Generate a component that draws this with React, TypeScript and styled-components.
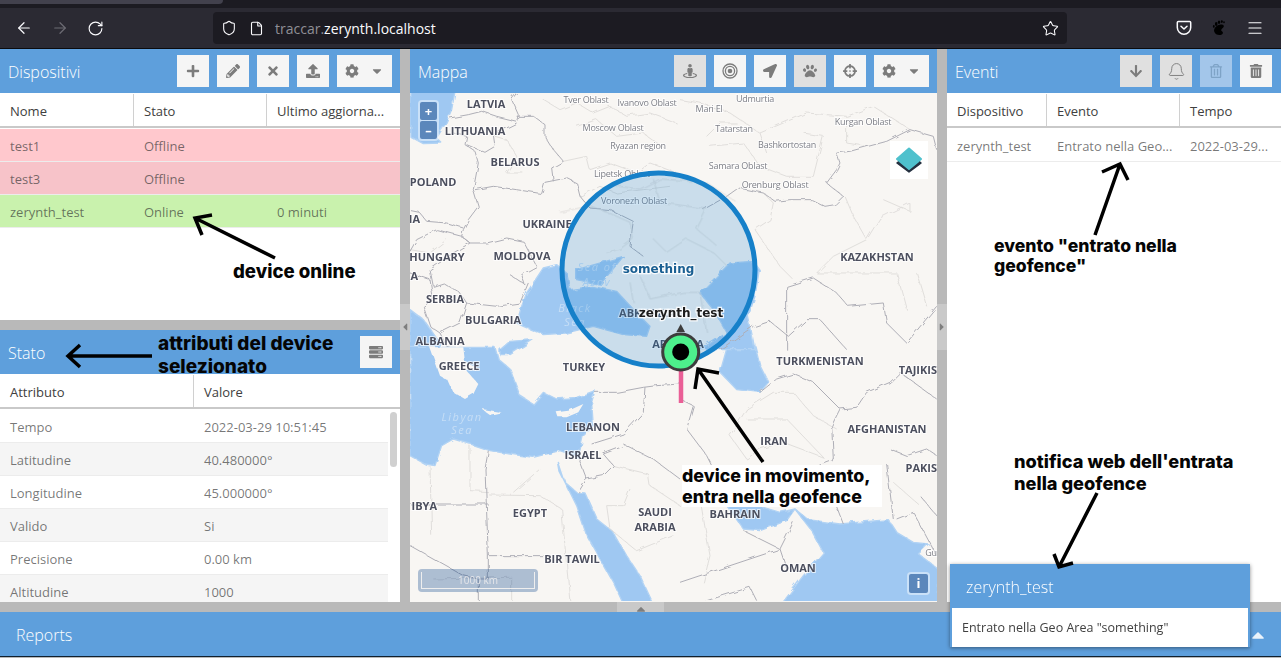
import React from 'react';
import styled, { createGlobalStyle } from 'styled-components';
import { ArrowLeft, ArrowRight, RotateCw, Shield, File, Star, Menu, Bell } from 'lucide-react';
import {
  FaPlus, FaPencilAlt, FaTimes, FaUpload, FaCog, FaCaretDown, FaStreetView,
  FaLocationArrow, FaPaw, FaCrosshairs, FaArrowDown, FaRegTrashAlt, FaTrashAlt, FaServer,
  FaCaretUp, FaCaretLeft, FaCaretRight,
} from 'react-icons/fa';

const Global = createGlobalStyle`
  html, body { margin: 0; padding: 0; background: #000; }
  body { font-family: "Open Sans", "Noto Sans", sans-serif; }
  * { box-sizing: border-box; }
`;

const Screen = styled.div`
  position: relative;
  width: 1281px;
  height: 658px;
  overflow: hidden;
  display: flex;
  flex-direction: column;
  background: #b9b9b9;
`;

/* ---------- browser chrome ---------- */
const TabStrip = styled.div`
  height: 8px;
  background: #1c1b22;
`;
const TabStub = styled.div`
  width: 223px;
  height: 4px;
  background: #42414d;
  border-radius: 0 0 4px 0;
`;
const BrowserBar = styled.div`
  height: 41px;
  background: #2b2a33;
  border-bottom: 1px solid #0b0b0e;
  display: flex;
  align-items: center;
  color: #fbfbfe;
`;
const NavIcons = styled.div`
  width: 213px;
  padding-left: 15px;
  display: flex;
  gap: 18px;
  align-items: center;
`;
const NavSlot = styled.span<{ $dim?: boolean }>`
  display: flex;
  color: ${p => (p.$dim ? '#6d6c74' : '#fbfbfe')};
`;
const UrlBar = styled.div`
  width: 854px;
  height: 32px;
  background: #1c1b22;
  border-radius: 4px;
  display: flex;
  align-items: center;
  padding-left: 8px;
  padding-right: 8px;
`;
const UrlIcons = styled.div`
  display: flex;
  gap: 12px;
  width: 54px;
  align-items: center;
`;
const UrlText = styled.div`
  font-size: 14px;
  color: #fbfbfe;
  flex: 1;
  white-space: nowrap;
`;
const UrlDim = styled.span`
  color: #8f8f96;
`;
const ExtIcons = styled.div`
  flex: 1;
  display: flex;
  align-items: center;
  justify-content: flex-end;
  gap: 19px;
  padding-right: 17px;
`;

/* ---------- workspace ---------- */
const Workspace = styled.div`
  display: flex;
  height: 553px;
`;
const SideColumn = styled.div<{ $w: number }>`
  width: ${p => p.$w}px;
  flex: none;
  display: flex;
  flex-direction: column;
`;
const CenterColumn = styled.div`
  width: 527px;
  flex: none;
  display: flex;
  flex-direction: column;
`;
const VSplit = styled.div`
  position: relative;
  width: 10px;
  flex: none;
  background: #b9b9b9;
`;
const HSplit = styled.div`
  position: relative;
  height: 10px;
  flex: none;
  background: #b9b9b9;
`;
const SplitHandleV = styled.div<{ $top: number }>`
  position: absolute;
  left: 0;
  top: ${p => p.$top}px;
  width: 10px;
  height: 46px;
  background: #c9c9c9;
  color: #7e7e7e;
  display: flex;
  align-items: center;
  justify-content: center;
  font-size: 12px;
`;
const SplitHandleH = styled.div`
  position: absolute;
  left: 617px;
  top: 0;
  width: 47px;
  height: 10px;
  background: #c9c9c9;
  color: #7e7e7e;
  display: flex;
  align-items: flex-start;
  justify-content: center;
  font-size: 14px;
  line-height: 0;
`;
const Panel = styled.section<{ $h?: number }>`
  ${p => (p.$h ? `height: ${p.$h}px;` : 'flex: 1;')}
  min-height: 0;
  background: #fff;
  display: flex;
  flex-direction: column;
  overflow: hidden;
`;
const PanelHeader = styled.header`
  height: 44px;
  flex: none;
  background: #5e9fdc;
  display: flex;
  align-items: center;
  justify-content: space-between;
  padding: 0 8px;
`;
const PanelTitle = styled.h2`
  margin: 2px 0 0;
  font-size: 16px;
  font-weight: 300;
  color: #fff;
`;
const Toolbar = styled.div<{ $pad?: number }>`
  display: flex;
  gap: 8px;
  padding-right: ${p => p.$pad ?? 0}px;
`;
const ToolButton = styled.button<{ $state?: 'on' | 'off'; $wide?: boolean }>`
  width: ${p => (p.$wide ? 55 : 32)}px;
  height: 32px;
  border: 0;
  padding: 0;
  display: flex;
  align-items: center;
  justify-content: center;
  gap: 11px;
  font-size: 14px;
  color: #7c7c7c;
  background: ${p => (p.$state === 'on' ? '#e0e0e0' : '#f5f5f5')};
  ${p => p.$state === 'off' && 'background: #a3c6ea; color: #7ea3c6;'}
`;
const HeadRow = styled.div`
  height: 34px;
  flex: none;
  display: flex;
  margin-top: 1px;
  border-bottom: 2px solid #c9c9c9;
  margin-bottom: 1px;
  background: #fff;
`;
const HeadCell = styled.div<{ $w: number; $last?: boolean }>`
  width: ${p => p.$w}px;
  flex: none;
  padding-left: 10px;
  font-size: 13px;
  line-height: 34px;
  color: #404040;
  white-space: nowrap;
  border-right: ${p => (p.$last ? '0' : '1px solid #d0d0d0')};
`;
const Row = styled.div<{ $bg: string; $w?: number }>`
  height: 33px;
  flex: none;
  width: ${p => (p.$w ? `${p.$w}px` : 'auto')};
  display: flex;
  background: ${p => p.$bg};
  border-bottom: 1px solid #ececec;
`;
const Cell = styled.div<{ $w: number }>`
  width: ${p => p.$w}px;
  flex: none;
  padding: 1px 0 0 10px;
  font-size: 13px;
  line-height: 33px;
  color: rgba(50, 50, 50, 0.66);
  white-space: nowrap;
`;
const ScrollThumb = styled.div`
  position: absolute;
  left: 390px;
  top: 412px;
  width: 7px;
  height: 55px;
  border-radius: 4px;
  background: #d0d0d0;
`;

/* ---------- map ---------- */
const MapPanel = styled.div`
  position: relative;
  flex: 1;
  overflow: hidden;
  background: #f8f6f3;
`;
const MapSvg = styled.svg`
  display: block;
  width: 527px;
  height: 508px;
`;
const Strong = styled.path`
  fill: none;
  stroke: #aeaeb6;
  stroke-width: 3;
  stroke-linejoin: round;
`;
const Faint = styled.path`
  fill: none;
  stroke: #dcdad8;
  stroke-width: 2.6;
  stroke-linejoin: round;
`;
const Water = styled.path`
  fill: #9fc8f2;
  stroke: #b2d3f4;
  stroke-width: 4;
  stroke-linejoin: round;
`;
const Island = styled.path`
  fill: #f8f6f3;
`;
const Country = styled.text<{ $end?: boolean }>`
  font-family: "Open Sans", "Noto Sans", sans-serif;
  font-size: 11px;
  font-weight: 700;
  fill: #4c4f5e;
  stroke: rgba(255, 255, 255, 0.7);
  stroke-width: 2px;
  paint-order: stroke;
  text-anchor: ${p => (p.$end ? 'end' : 'middle')};
  dominant-baseline: central;
`;
const Region = styled.text`
  font-family: "Open Sans", "Noto Sans", sans-serif;
  font-size: 9px;
  letter-spacing: -0.25px;
  fill: #7d7f87;
  stroke: rgba(255, 255, 255, 0.7);
  stroke-width: 2px;
  paint-order: stroke;
  text-anchor: middle;
  dominant-baseline: central;
`;
const Sea = styled.text`
  font-family: "Open Sans", "Noto Sans", sans-serif;
  font-size: 11px;
  font-style: italic;
  letter-spacing: 1.5px;
  fill: #c6def6;
  text-anchor: middle;
  dominant-baseline: central;
`;
const FeatureLabel = styled.text<{ $c: string }>`
  font-family: "DejaVu Sans", sans-serif;
  font-size: 12px;
  font-weight: 700;
  fill: ${p => p.$c};
  stroke: rgba(255, 255, 255, 0.85);
  stroke-width: 2.5px;
  paint-order: stroke;
  text-anchor: middle;
  dominant-baseline: central;
`;
const ZoomBox = styled.div`
  position: absolute;
  left: 8px;
  top: 7px;
  padding: 2px;
  background: rgba(255, 255, 255, 0.45);
  border-radius: 4px;
  display: flex;
  flex-direction: column;
  gap: 1px;
`;
const MapBtn = styled.div<{ $h?: number }>`
  width: 17px;
  height: ${p => p.$h ?? 18}px;
  background: rgba(0, 60, 136, 0.55);
  color: #fff;
  font-size: 13px;
  font-weight: 700;
  line-height: ${p => p.$h ?? 18}px;
  text-align: center;
  border-radius: 2px;
`;
const LayerBox = styled.div`
  position: absolute;
  left: 480px;
  top: 48px;
  width: 38px;
  height: 38px;
  background: #fff;
  display: flex;
  align-items: center;
  justify-content: center;
`;
const InfoBox = styled.div`
  position: absolute;
  left: 497px;
  top: 479px;
  padding: 2px;
  background: rgba(255, 255, 255, 0.45);
  border-radius: 4px;
`;
const InfoBtn = styled(MapBtn)`
  width: 19px;
  height: 19px;
  line-height: 19px;
  font-family: "Open Sans", sans-serif;
`;
const ScaleBox = styled.div`
  position: absolute;
  left: 8px;
  top: 476px;
  width: 120px;
  height: 23px;
  padding: 3px;
  background: rgba(0, 60, 136, 0.3);
  border-radius: 4px;
`;
const ScaleInner = styled.div`
  height: 17px;
  border: 1px solid #eee;
  border-top: 0;
  font-size: 10px;
  color: rgba(238, 238, 238, 0.85);
  text-align: center;
  line-height: 17px;
`;

/* ---------- bottom ---------- */
const ReportsBar = styled.footer`
  height: 45px;
  flex: none;
  background: #5e9fdc;
  border-bottom: 1px solid #10202e;
  padding: 2px 16px 0;
  display: flex;
  align-items: center;
  justify-content: space-between;
  color: #fff;
  font-size: 16px;
  font-weight: 300;
`;
const ReportsCaret = styled.span`
  display: flex;
  margin-right: -3px;
  color: #eaf3fb;
`;
const Toast = styled.aside`
  position: absolute;
  left: 950px;
  top: 564px;
  width: 300px;
  height: 83px;
  background: #5e9fdc;
  box-shadow: 0 1px 4px rgba(0, 0, 0, 0.45);
  display: flex;
  flex-direction: column;
  padding: 0 2px 2px;
`;
const ToastTitle = styled.div`
  height: 44px;
  flex: none;
  padding-left: 14px;
  line-height: 46px;
  font-size: 16px;
  font-weight: 300;
  color: #fff;
`;
const ToastBody = styled.div`
  flex: 1;
  background: #fff;
  padding-left: 10px;
  line-height: 39px;
  font-size: 12.5px;
  color: #404040;
`;

/* ---------- annotations ---------- */
const NoteLayer = styled.svg`
  position: absolute;
  left: 0;
  top: 0;
  width: 1281px;
  height: 658px;
  pointer-events: none;
`;
const Note = styled.div<{ $x: number; $y: number; $size: number; $lh: number; $bg?: boolean }>`
  position: absolute;
  left: ${p => p.$x}px;
  top: ${p => p.$y}px;
  font-family: Inter, "Open Sans", sans-serif;
  font-size: ${p => p.$size}px;
  font-weight: 800;
  line-height: ${p => p.$lh}px;
  color: #050505;
  white-space: pre;
  ${p => p.$bg && 'background: #fff; padding: 0 11px 0 0;'}
`;

const waterA = [
  'M0,-5 L135,-5 L125,50 L105,95 L80,135 L95,150 L40,152 L0,130 Z',
  'M320,690 L335,640 L350,600 L400,525 L440,515 L470,540 L480,590 L545,580 L620,595 L680,660 L720,700 L710,730 L640,725 L550,700 L470,720 L400,725 L340,700 Z',
  'M500,530 L640,490 L620,515 L570,575 L500,560 Z',
  'M0,650 L40,680 L90,750 L75,785 L0,785 Z',
  'M270,770 L300,745 L370,740 L340,760 L300,785 L270,785 Z',
];
const waterB = [
  'M0,-5 L0,320 L45,345 L75,350 L95,290 L130,270 L180,285 L240,305 L300,315 L370,325 L450,305 L505,325 L520,260 L550,230 L545,160 L555,125 L500,145 L440,150 L400,130 L370,165 L330,140 L300,60 L265,30 L255,-5 Z',
  'M445,340 L465,400 L500,430 L525,432 L560,510 L610,550 L650,620 L690,680 L730,765 L640,765 L610,700 L570,630 L530,560 L500,470 L450,370 Z',
];
const waterC = [
  'M60,-10 L225,-10 L240,50 L265,100 L240,130 L170,122 L120,70 L140,0 Z',
  'M140,400 L200,460 L300,490 L345,480 L320,515 L240,545 L190,540 L140,470 Z',
  'M345,480 L385,512 L480,525 L625,512 L650,550 L700,580 L745,585 L715,615 L775,660 L775,765 L305,765 L370,680 L430,610 L395,545 Z',
];
const waterD = [
  'M60,600 L105,555 L150,510 L220,505 L238,530 L225,610 L205,670 L225,770 L60,770 L140,720 L100,650 Z',
];

const strongA = [
  'M120,75 L175,65 L215,55 L260,70 L320,85 L325,65 L305,20 L320,0',
  'M320,70 L370,70 L405,95 L405,130 L430,170 L460,205 L425,225 L430,265',
  'M195,290 L250,280 L320,290 L395,302 L405,268 L470,255 L500,270 L510,310 L540,345 L600,350 L670,385 L665,420 L660,460 L700,490',
  'M165,155 L195,175 L205,210 L190,290 L205,340 L175,380 L160,410 L155,430 L180,450',
  'M165,155 L170,130 L130,120 M170,155 L225,178 L255,160 L250,125 L320,90',
  'M0,350 L25,355 L50,385 L110,390 L160,405',
  'M0,475 L20,440 L80,410 L155,430 L180,450 L230,450 L290,435 L340,445 L380,520 L335,545 L345,575 L300,545',
  'M180,450 L130,480 L60,530 L70,580 L100,570 L150,600 L170,630 L260,640 L330,630 L355,570',
  'M0,540 L60,560 L70,620 L40,640 L60,700 L90,720 L150,690 L170,630',
  'M90,720 L110,760 L170,780',
];
const faintA = [
  'M255,130 L290,140 L320,190 L290,240 L340,240',
  'M400,20 L450,50 L500,30 L550,60 L600,40 L650,70 L720,60 L800,90',
  'M500,100 L560,80 L620,130 L700,120 L770,170',
  'M540,230 L600,210 L680,240 L720,210 L800,240',
  'M460,205 L530,190 L540,230',
  'M510,310 L570,280 L620,300 L700,290 L780,280',
  'M0,470 L60,480 L110,440',
];
const strongB = [
  'M555,130 L620,130 L700,115 L740,110 L810,105',
  'M705,115 L700,190 L640,255 L545,285',
  'M640,285 L730,330 L810,390',
  'M580,315 L640,292',
  'M505,325 L530,390 L505,430',
  'M530,390 L580,380 L610,350 L580,315',
  'M235,305 L225,360 L235,620 L235,690 L205,690 L205,760',
  'M235,620 L400,620',
  'M0,590 L160,680 L205,690',
  'M0,465 L235,465',
];
const faintB = [
  'M60,350 L65,560 M180,290 L180,425 L235,428',
  'M235,438 L390,440 L455,480 L480,760',
  'M390,360 L310,430 M610,350 L715,375 L720,410 L810,470',
  'M660,420 L640,470 L590,470 L600,540 L680,605 L790,560',
  'M70,690 L305,685 L305,760',
];
const strongC = [
  'M0,150 L40,170 L20,240 L80,320 L130,420',
  'M240,130 L290,90 L340,75 L400,100 L480,180 L530,175 L560,130 L630,100 L660,70 L770,150',
  'M480,180 L455,230 L460,330 L420,345 L490,525',
  'M630,300 L680,320 L740,300 L770,320',
  'M620,345 L640,510 M720,440 L770,500',
  'M650,510 L700,490 L770,620',
  'M0,700 L300,600 L340,520 M300,600 L320,660',
  'M80,755 L210,715 L230,755',
  'M190,545 L300,600',
];
const faintC = [
  'M200,180 L280,130 L340,130 L400,200 L470,240',
  'M200,210 L320,210 L430,325 L310,280 L240,300 L200,330 L150,260 L200,180',
  'M430,430 L500,400 L570,380 M640,400 L720,470',
  'M60,450 L90,620 L70,700',
];
const strongD = [
  'M440,270 L490,310 L465,335 L435,340 L395,320 L330,320 L285,325 L250,300 L175,285 L140,310 L70,350',
  'M440,270 L470,230 L480,210 L470,180 L510,175 L620,145 L690,110 L760,130 L770,170',
  'M320,770 L320,580 L400,555 L470,600 L505,640 L610,630 L620,690 L680,750 L770,640',
  'M225,700 L270,685 L325,730 L380,680 L420,680 L500,770',
  'M120,770 L220,700',
];
const faintD = [
  'M0,20 L60,30 L150,60 L240,120 L380,60 L500,70 L580,40 L690,110',
  'M90,160 L190,150 L240,220 L320,250 L400,250 L430,130 L370,120',
  'M80,130 L120,90 L170,90 M240,120 L260,180',
  'M500,100 L500,150 L560,160 M250,300 L280,330 L270,380 L225,410 L300,520 L340,560',
  'M410,540 L460,490 L560,440 L520,370 L495,310 M560,440 L600,375 L690,330 L690,355 L610,320',
  'M410,540 L650,540 L680,650 M710,540 L740,640',
];
const faintE = [
  'M180,150 L270,190 L280,240 L240,270 L200,280 M340,240 L380,280 L440,240 L520,280 L560,320',
  'M340,60 L360,130 L500,150 L470,210 L530,260',
  'M300,350 L330,420 L430,400 L480,400 L500,520',
  'M270,370 L280,430 M60,160 L150,140 L200,160',
  'M220,80 L300,90 L360,60 L500,70 L590,130',
];

const countries: [string, number, number][] = [
  ['LATVIA', 486, 104], ['LITHUANIA', 475, 131], ['BELARUS', 515, 162], ['POLAND', 433, 182],
  ['UKRAINE', 547, 224], ['HUNGARY', 437, 257], ['MOLDOVA', 522, 256], ['SERBIA', 445, 299],
  ['BULGARIA', 493, 320], ['ALBANIA', 440, 341], ['GREECE', 459, 366], ['TURKEY', 584, 367],
  ['ABKHAZIA', 647, 313], ['ARMENIA', 678, 344], ['TURKMENISTAN', 820, 361],
  ['KAZAKHSTAN', 877, 257], ['AFGHANISTAN', 887, 429], ['IRAN', 774, 441],
  ['LEBANON', 593, 427], ['ISRAEL', 583, 455], ['EGYPT', 530, 513], ['SAUDI', 655, 512],
  ['ARABIA', 655, 527], ['BIR TAWIL', 572, 559], ['BAHRAIN', 735, 514], ['OMAN', 798, 568],
];
const clipped: [string, number, number][] = [
  ['TAJIKIS', 937, 370], ['PAKIS', 937, 468], ['IBYA', 437, 506], ['IA', 420, 219], ['A', 418, 276],
];
const regions: [string, number, number][] = [
  ['Tver Oblast', 586, 100], ['Ivanovo Oblast', 647, 103], ['Udmurtia', 755, 99], ['Mari El', 709, 109],
  ['Moscow Oblast', 613, 128], ['Tatarstan', 734, 129], ['Kurgan Oblast', 863, 122], ['Ryazan region', 638, 146],
  ['Bashkortostan', 787, 145], ['Samara Oblast', 738, 166], ['Lipetsk Oblast', 622, 174], ['Orenburg Oblast', 775, 185],
  ['Voronezh Oblast', 634, 201], ['Gu', 931, 553],
];
const seas: [string, number, number][] = [
  ['Sea of', 597, 267], ['Azov', 597, 282], ['Black', 575, 308], ['Sea', 575, 322], ['Libyan', 462, 417], ['Sea', 462, 430],
];

const Draw = ({ ox, oy, water = [], strong = [], faint = [] }: { ox: number; oy: number; water?: string[]; strong?: string[]; faint?: string[] }) => (
  <g transform={`translate(${ox} ${oy}) scale(0.3333)`}>
    {water.map((d, i) => <Water key={i} d={d} />)}
    {faint.map((d, i) => <Faint key={i} d={d} />)}
    {strong.map((d, i) => <Strong key={i} d={d} />)}
  </g>
);

const MapDrawing = () => (
  <MapSvg viewBox="410 94 527 508">
    <defs>
      <filter id="coast" filterUnits="userSpaceOnUse" x="400" y="84" width="547" height="528">
        <feTurbulence type="fractalNoise" baseFrequency="0.11" numOctaves="2" seed="4" />
        <feDisplacementMap in="SourceGraphic" scale="5" />
      </filter>
    </defs>
    <g filter="url(#coast)">
      <Draw ox={410} oy={94} water={waterA} strong={strongA} faint={faintA} />
      <Draw ox={410} oy={350} water={waterB} strong={strongB} faint={faintB} />
      <Draw ox={680} oy={350} water={waterC} strong={strongC} faint={faintC} />
      <Draw ox={680} oy={94} water={waterD} strong={strongD} faint={faintD} />
      <Draw ox={540} oy={160} faint={faintE} />
      <g transform="translate(410 350) scale(0.3333)">
        <Island d="M60,-5 L160,-5 L165,40 L210,60 L170,65 L205,105 L190,135 L165,150 L130,130 L115,95 L90,80 Z" />
        <Island d="M440,190 L475,185 L520,165 L505,190 L470,205 L445,205 Z" />
        <Island d="M215,180 L275,190 L240,197 Z" />
      </g>
    </g>
    {countries.map(([t, x, y]) => <Country key={t} x={x} y={y}>{t}</Country>)}
    {clipped.map(([t, x, y]) => <Country key={t} $end x={x} y={y}>{t}</Country>)}
    {regions.map(([t, x, y]) => <Region key={t} x={x} y={y}>{t}</Region>)}
    {seas.map(([t, x, y], i) => <Sea key={i} x={x} y={y}>{t}</Sea>)}

    <circle cx={658.5} cy={270.5} r={96.5} fill="rgba(21,127,204,0.2)" stroke="#1680c9" strokeWidth={5} />
    <FeatureLabel $c="#1a5f92" x={658.5} y={270}>something</FeatureLabel>
    <line x1={681} y1={370} x2={681} y2={404} stroke="#ea5f96" strokeWidth={4.5} />
    <circle cx={680.7} cy={353} r={18} fill="#4df08c" stroke="#3d3d3d" strokeWidth={3} />
    <circle cx={680.7} cy={353} r={8.5} fill="#000" />
    <path d="M680.7 325 L685 333 L676.4 333 Z" fill="#3d3d3d" />
    <FeatureLabel $c="#1c1c1c" x={681} y={314}>zerynth_test</FeatureLabel>
  </MapSvg>
);

const PocketIcon = () => (
  <svg width="16" height="16" viewBox="0 0 16 16" fill="none" stroke="#fbfbfe" strokeWidth="1.5">
    <path d="M2.4 1.5h11.2c.6 0 1.1.5 1.1 1.1v5c0 3.7-3 6.7-6.7 6.7S1.3 11.3 1.3 7.6v-5c0-.6.5-1.1 1.1-1.1z" />
    <path d="M5 6.2 L8 9 L11 6.2" strokeLinecap="round" strokeLinejoin="round" />
  </svg>
);
const FootIcon = () => (
  <svg width="16" height="18" viewBox="0 0 16 18" fill="#000">
    <path d="M11 5.5c2 .3 2.5 2 1 3.2-1.8 1.4-2.4 2.8-1 3.6 1.2.7 1.4 2.3-.2 3.2-2.6 1.4-6.8.2-7.6-3C2.4 9.300 6 4.800 11 5.500z" />
    <ellipse cx="5.200" cy="5" rx="1.300" ry="2" />
    <ellipse cx="8" cy="3.200" rx="1.200" ry="1.800" />
    <ellipse cx="10.800" cy="2.600" rx="1" ry="1.400" />
    <ellipse cx="13" cy="3.200" rx=".8" ry="1" />
    <ellipse cx="2.800" cy="7.400" rx=".9" ry="1.400" />
  </svg>
);
const LayersIcon = () => (
  <svg width="26" height="26" viewBox="0 0 26 26">
    <path d="M13 6 L25 16 L13 25 L1 16 Z" fill="#24303f" stroke="#24303f" strokeWidth="1.500" strokeLinejoin="round" />
    <path d="M13 1.500 L25 12 L13 22 L1 12 Z" fill="#4fc1cd" stroke="#4fc1cd" strokeWidth="2" strokeLinejoin="round" />
  </svg>
);
const RingsIcon = () => (
  <svg width="16" height="16" viewBox="0 0 16 16" fill="none" stroke="currentColor">
    <circle cx="8" cy="8" r="7" strokeWidth="1.300" />
    <circle cx="8" cy="8" r="4.600" strokeWidth="1.300" />
    <circle cx="8" cy="8" r="2.300" fill="currentColor" stroke="none" />
  </svg>
);

const arrows = [
  'M275 258 L195 218 M212 215 L195 218 L202 235',
  'M152 356 L68 356 M80 345 L68 356 L80 367',
  'M1095 235 L1120 164 M1102 172 L1120 164 L1128 180',
  'M763 462 L698 369 M719 373 L698 369 L695 389',
  'M1097 493 L1059 567 M1054 554 L1059 567 L1073 563',
];

const statusRows = [
  ['Tempo', '2022-03-29 10:51:45'], ['Latitudine', '40.480000°'], ['Longitudine', '45.000000°'],
  ['Valido', 'Si'], ['Precisione', '0.00 km'], ['Altitudine', '1000'],
];

export default function App() {
  return (
    <Screen>
      <Global />
      <TabStrip><TabStub /></TabStrip>
      <BrowserBar>
        <NavIcons>
          <NavSlot><ArrowLeft size={18} strokeWidth={1.6} /></NavSlot>
          <NavSlot $dim><ArrowRight size={18} strokeWidth={1.6} /></NavSlot>
          <NavSlot><RotateCw size={17} strokeWidth={1.6} /></NavSlot>
        </NavIcons>
        <UrlBar>
          <UrlIcons>
            <Shield size={16} strokeWidth={1.6} />
            <File size={15} strokeWidth={1.8} />
          </UrlIcons>
          <UrlText><UrlDim>traccar.</UrlDim>zerynth.localhost</UrlText>
          <Star size={17} strokeWidth={1.5} />
        </UrlBar>
        <ExtIcons>
          <PocketIcon />
          <FootIcon />
          <Menu size={18} strokeWidth={1.6} />
        </ExtIcons>
      </BrowserBar>

      <Workspace>
        <SideColumn $w={400}>
          <Panel $h={271}>
            <PanelHeader>
              <PanelTitle>Dispositivi</PanelTitle>
              <Toolbar>
                <ToolButton><FaPlus /></ToolButton>
                <ToolButton><FaPencilAlt /></ToolButton>
                <ToolButton><FaTimes /></ToolButton>
                <ToolButton><FaUpload /></ToolButton>
                <ToolButton $wide><FaCog /><FaCaretDown /></ToolButton>
              </Toolbar>
            </PanelHeader>
            <HeadRow>
              <HeadCell $w={134}>Nome</HeadCell>
              <HeadCell $w={133}>Stato</HeadCell>
              <HeadCell $w={133} $last>Ultimo aggiorna...</HeadCell>
            </HeadRow>
            <Row $bg="#ffc8cd"><Cell $w={134}>test1</Cell><Cell $w={133}>Offline</Cell></Row>
            <Row $bg="#f7c3c9"><Cell $w={134}>test3</Cell><Cell $w={133}>Offline</Cell></Row>
            <Row $bg="#c9f2ad"><Cell $w={134}>zerynth_test</Cell><Cell $w={133}>Online</Cell><Cell $w={133}>0 minuti</Cell></Row>
          </Panel>
          <HSplit />
          <Panel>
            <PanelHeader>
              <PanelTitle>Stato</PanelTitle>
              <ToolButton><FaServer /></ToolButton>
            </PanelHeader>
            <HeadRow>
              <HeadCell $w={194}>Attributo</HeadCell>
              <HeadCell $w={206} $last>Valore</HeadCell>
            </HeadRow>
            {statusRows.map(([a, v], i) => (
              <Row key={a} $bg={i % 2 ? '#f5f5f5' : '#fff'} $w={388}>
                <Cell $w={194}>{a}</Cell>
                <Cell $w={194}>{v}</Cell>
              </Row>
            ))}
          </Panel>
        </SideColumn>

        <VSplit><SplitHandleV $top={255}><FaCaretLeft /></SplitHandleV></VSplit>

        <CenterColumn>
          <PanelHeader>
            <PanelTitle>Mappa</PanelTitle>
            <Toolbar>
              <ToolButton $state="on"><FaStreetView /></ToolButton>
              <ToolButton><RingsIcon /></ToolButton>
              <ToolButton><FaLocationArrow /></ToolButton>
              <ToolButton $state="on"><FaPaw /></ToolButton>
              <ToolButton><FaCrosshairs /></ToolButton>
              <ToolButton $wide><FaCog /><FaCaretDown /></ToolButton>
            </Toolbar>
          </PanelHeader>
          <MapPanel>
            <MapDrawing />
            <ZoomBox>
              <MapBtn>+</MapBtn>
              <MapBtn>–</MapBtn>
            </ZoomBox>
            <LayerBox><LayersIcon /></LayerBox>
            <ScaleBox><ScaleInner>1000 km</ScaleInner></ScaleBox>
            <InfoBox><InfoBtn>i</InfoBtn></InfoBox>
          </MapPanel>
        </CenterColumn>

        <VSplit><SplitHandleV $top={255}><FaCaretRight /></SplitHandleV></VSplit>

        <SideColumn $w={334}>
          <Panel>
            <PanelHeader>
              <PanelTitle>Eventi</PanelTitle>
              <Toolbar $pad={1}>
                <ToolButton $state="on"><FaArrowDown /></ToolButton>
                <ToolButton $state="on"><Bell size={19} strokeWidth={1.2} /></ToolButton>
                <ToolButton $state="off"><FaRegTrashAlt /></ToolButton>
                <ToolButton><FaTrashAlt /></ToolButton>
              </Toolbar>
            </PanelHeader>
            <HeadRow>
              <HeadCell $w={100}>Dispositivo</HeadCell>
              <HeadCell $w={133}>Evento</HeadCell>
              <HeadCell $w={101} $last>Tempo</HeadCell>
            </HeadRow>
            <Row $bg="#fff">
              <Cell $w={100}>zerynth_test</Cell>
              <Cell $w={133}>Entrato nella Geo...</Cell>
              <Cell $w={101}>2022-03-29...</Cell>
            </Row>
          </Panel>
        </SideColumn>
      </Workspace>

      <HSplit><SplitHandleH><FaCaretUp /></SplitHandleH></HSplit>
      <ReportsBar>
        <span>Reports</span>
        <ReportsCaret><FaCaretUp size={20} /></ReportsCaret>
      </ReportsBar>

      <ScrollThumb />
      <Toast>
        <ToastTitle>zerynth_test</ToastTitle>
        <ToastBody>Entrato nella Geo Area "something"</ToastBody>
      </Toast>

      <Note $x={682} $y={465} $size={17.8} $lh={21} $bg>{'device in movimento,\nentra nella geofence'}</Note>
      <Note $x={233} $y={260} $size={18.6} $lh={22}>device online</Note>
      <Note $x={158} $y={332} $size={19} $lh={23}>{'attributi del device\nselezionato'}</Note>
      <Note $x={994} $y={236} $size={17.6} $lh={20}>{'evento "entrato nella\ngeofence"'}</Note>
      <Note $x={1014} $y={450} $size={18.2} $lh={22}>{"notifica web dell'entrata\nnella geofence"}</Note>
      <NoteLayer viewBox="0 0 1281 658">
        {arrows.map((d, i) => (
          <path key={i} d={d} fill="none" stroke="#000" strokeWidth={3.5} />
        ))}
      </NoteLayer>
    </Screen>
  );
}
